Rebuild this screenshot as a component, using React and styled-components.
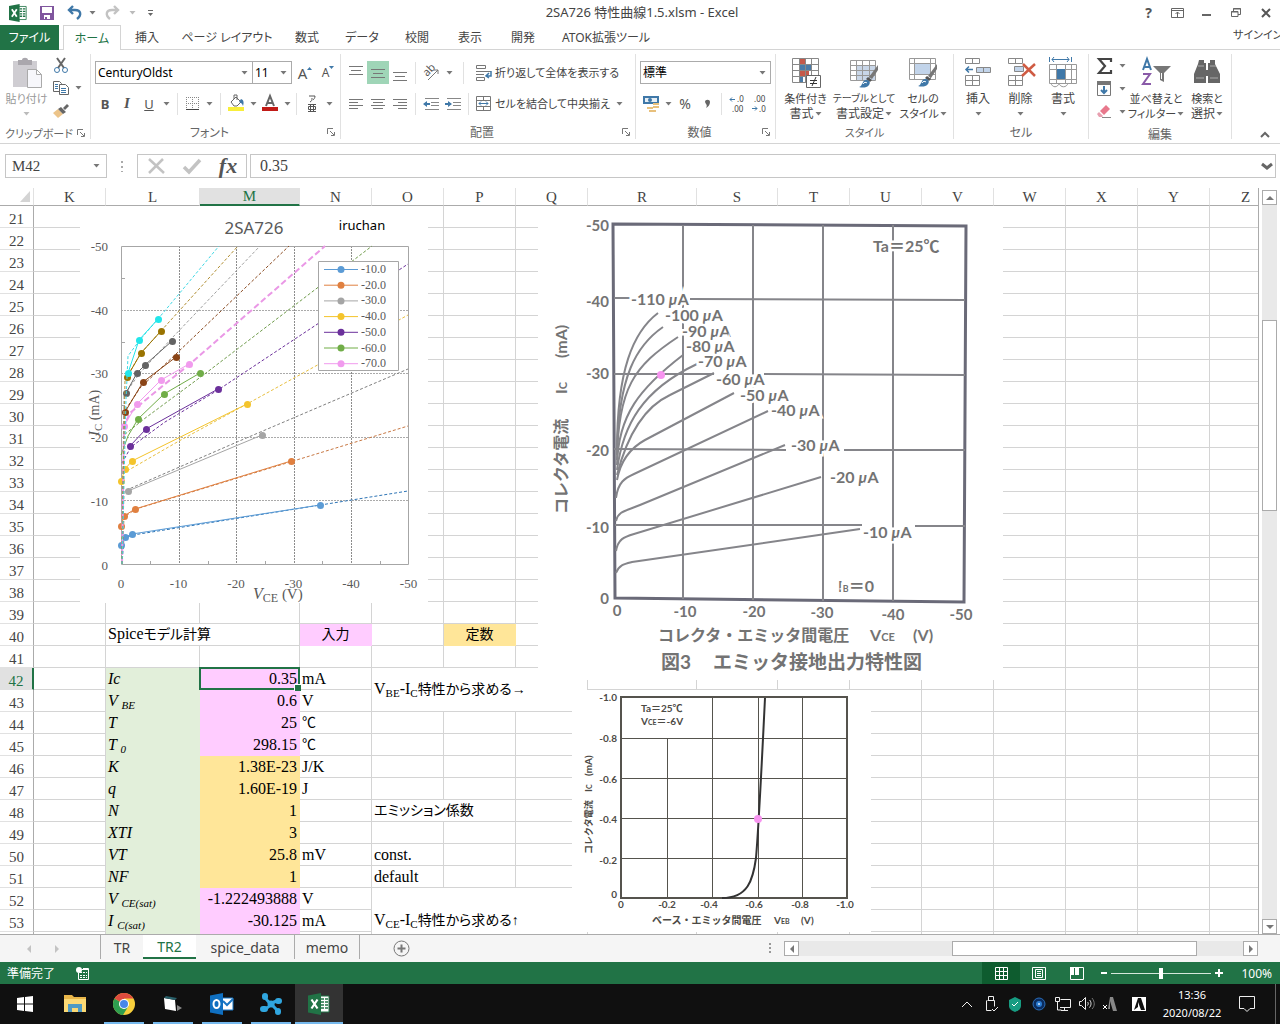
import React from "react";
import styled, { createGlobalStyle, css } from "styled-components";

const UI = `"Noto Sans", "Noto Sans CJK JP", sans-serif`;
const SERIF = `"Liberation Serif", "Noto Sans CJK JP", serif`;
const GREEN = "#217346";

const GlobalStyle = createGlobalStyle`
  * {
    box-sizing: border-box;
  }

  body {
    margin: 0;
    overflow: hidden;
    background: #fff;
    color: #444;
    font: 12px/15px ${UI};
    font-feature-settings: "palt";
  }

  button,
  input,
  select {
    margin: 0;
    padding: 0;
    border: 0;
    outline: 0;
    background: none;
    color: inherit;
    font: inherit;
    font-feature-settings: inherit;
  }
`;

const Window = styled.div`
  height: 100vh;
  display: flex;
  flex-direction: column;
`;

/* title bar */

const TitleBar = styled.header`
  height: 25px;
  flex: none;
  display: grid;
  grid-template-columns: 1fr auto 1fr;
  align-items: center;
  padding: 0 0 0 4px;
`;

const Title = styled.h1`
  margin: 0;
  font: inherit;
  font-size: 13px;
`;

const Tools = styled.div`
  display: flex;
  align-items: center;
  justify-content: ${(p) => (p.$end ? "flex-end" : "flex-start")};
`;

const IconButton = styled.button`
  flex: none;
  width: ${(p) => p.$w || 22}px;
  height: ${(p) => p.$h || 22}px;
  display: flex;
  align-items: center;
  justify-content: center;
  background: ${(p) => (p.$active ? "#9fd5b7" : "none")};

  svg {
    flex: none;
    overflow: visible;
  }
`;

/* ribbon */

const Tabs = styled.nav`
  height: 25px;
  flex: none;
  display: flex;
  border-bottom: 1px solid #d4d4d4;
`;

const Tab = styled.button`
  width: ${(p) => p.$w}px;
  height: 25px;
  white-space: nowrap;
  font-size: 12px;

  ${(p) =>
    p.$file &&
    css`
      margin-right: 4px;
      background: ${GREEN};
      color: #fff;
    `}

  ${(p) =>
    p.$active &&
    css`
      border: 1px solid #d4d4d4;
      border-bottom: 0;
      background: #fff;
      color: ${GREEN};
    `}
`;

const SignIn = styled.a`
  margin-left: auto;
  width: 47px;
  padding-top: 2px;
  overflow: hidden;
  white-space: nowrap;
  font-size: 11px;
  color: #444;
  text-decoration: none;
`;

const Ribbon = styled.div`
  height: 94px;
  flex: none;
  display: flex;
  border-bottom: 1px solid #d4d4d4;
`;

const Group = styled.section`
  width: ${(p) => p.$w}px;
  flex: none;
  margin: 4px 0;
  padding: 0 3px;
  border-right: 1px solid #e1e1e1;
  display: flex;
  flex-direction: column;
`;

const GroupBody = styled.div`
  height: 71px;
  display: flex;
`;

const GroupFoot = styled.div`
  display: flex;
  align-items: center;
  height: 18px;
  padding-top: 4px;
  color: #666;

  span {
    flex: 1;
    text-align: center;
    white-space: nowrap;
    font-size: ${(p) => p.$size || 12}px;
  }
`;

const Stack = styled.div`
  display: flex;
  flex-direction: column;
  flex: none;
  gap: ${(p) => p.$gap || 0}px;
  padding-top: ${(p) => p.$top || 0}px;
  padding-left: ${(p) => p.$left || 0}px;
`;

const Row = styled.div`
  display: flex;
  align-items: center;
  height: 23px;
`;

const Rule = styled.i`
  width: 1px;
  height: 22px;
  margin: 0 ${(p) => p.$m || 4}px;
  background: #e1e1e1;
`;

const Combo = styled.label`
  width: ${(p) => p.$w}px;
  height: 23px;
  margin-left: ${(p) => (p.$join ? -1 : 1)}px;
  padding: 0 4px 0 2px;
  border: 1px solid #ababab;
  display: flex;
  align-items: center;
  color: #000;

  select {
    flex: 1;
    min-width: 0;
    appearance: none;
  }
`;

const TextButton = styled.button`
  display: flex;
  align-items: center;
  gap: 3px;
  padding-left: 3px;
  white-space: nowrap;
  font-size: 11px;
`;

const BigButton = styled.button`
  width: ${(p) => p.$w}px;
  flex: none;
  display: flex;
  flex-direction: column;
  align-items: center;
  justify-content: flex-start;
  padding-top: 4px;
  color: ${(p) => (p.$off ? "#999" : "#444")};
  white-space: nowrap;

  > svg {
    margin-bottom: 3px;
    overflow: visible;
  }

  span {
    display: flex;
    align-items: center;
    gap: 1px;
    height: 15px;
  }
`;

const Narrow = styled.span`
  font-size: ${(p) => p.$size || 11}px;
`;

const Collapse = styled.div`
  flex: 1;
  display: flex;
  align-items: flex-end;
  justify-content: flex-end;
  padding: 0 4px 0 0;
`;

/* formula bar */

const FormulaBar = styled.div`
  height: 24px;
  flex: none;
  margin: 10px 4px 10px 5px;
  display: flex;
  font: 15px ${SERIF};
`;

const Boxed = styled.div`
  width: ${(p) => p.$w}px;
  flex: ${(p) => (p.$w ? "none" : 1)};
  border: 1px solid #c6c6c6;
  display: flex;
  align-items: center;
  margin-right: ${(p) => p.$after || 0}px;
  padding: 0 1px 0 ${(p) => p.$pad || 6}px;

  input {
    flex: 1;
    min-width: 0;
    font-size: ${(p) => p.$size || 15}px;
  }
`;

const Grip = styled.span`
  width: 30px;
  display: flex;
  align-items: center;
  justify-content: center;
`;

/* sheet */

const Work = styled.main`
  flex: 1;
  min-height: 0;
  display: flex;
`;

const Sheet = styled.div`
  position: relative;
  flex: 1;
  min-width: 0;
  overflow: hidden;
  border-right: 1px solid #ababab;
`;

const Grid = styled.table`
  width: 1282px;
  table-layout: fixed;
  border-collapse: separate;
  border-spacing: 0;
  color: #000;
  font: 16px/20px ${SERIF};

  th {
    padding: 0;
    font-weight: normal;
    font-size: 15px;
    color: #444;
  }
`;

const ColHead = styled.th`
  height: 18px;
  line-height: 16px;
  border-right: 1px solid #e1e1e1;
  border-bottom: 1px solid #ababab;

  ${(p) =>
    p.$on &&
    css`
      && {
        color: ${GREEN};
      }
      background: #e1e1e1;
      border-bottom: 2px solid ${GREEN};
    `}
`;

const RowHead = styled.th`
  height: 22px;
  line-height: 16px;
  vertical-align: bottom;
  border-right: 1px solid #ababab;
  border-bottom: 1px solid #e1e1e1;

  ${(p) =>
    p.$on &&
    css`
      && {
        color: ${GREEN};
      }
      background: #e1e1e1;
      border-right: 2px solid ${GREEN};
    `}
`;

const Cell = styled.td`
  height: 22px;
  padding: 0 2px;
  white-space: nowrap;
  text-align: ${(p) => p.$align || "left"};
  font-style: ${(p) => (p.$italic ? "italic" : "normal")};
  background: ${(p) => p.$bg || "none"};
  border: 0 solid ${(p) => p.$bg || "#d4d4d4"};
  border-width: 0 1px 1px 0;

  sub {
    font-size: 11px;
    line-height: 0;
    vertical-align: -3px;
  }

  ${(p) =>
    p.$selected &&
    css`
      position: relative;

      &::before {
        content: "";
        position: absolute;
        inset: -1px;
        border: 2px solid ${GREEN};
      }

      &::after {
        content: "";
        position: absolute;
        right: -2px;
        bottom: -2px;
        width: 6px;
        height: 6px;
        background: ${GREEN};
        border: 1px solid #fff;
        border-width: 1px 0 0 1px;
      }
    `}
`;

const Jp = styled.span`
  font-size: 14px;
  font-feature-settings: "palt";
`;

const Float = styled.svg`
  position: absolute;
  left: ${(p) => p.$x}px;
  top: ${(p) => p.$y}px;
  background: #fff;
  font-family: ${(p) => p.$font || SERIF};
  font-feature-settings: normal;
`;

const Scroll = styled.div`
  display: flex;
  flex-direction: ${(p) => (p.$vertical ? "column" : "row")};
  ${(p) =>
    p.$vertical
      ? "width: 15px; margin: 2px 3px 0 3px; flex: none;"
      : "flex: 0 1 474px; height: 15px;"}
  background: #e9e9e9;
`;

const ScrollButton = styled.button`
  width: 15px;
  height: 15px;
  flex: none;
  display: flex;
  align-items: center;
  justify-content: center;
  border: 1px solid #ababab;
  background: #fff;
`;

const Track = styled.div`
  flex: ${(p) => p.$grow} 1 0;
`;

const Thumb = styled.div`
  flex: ${(p) => p.$grow} 1 0;
  border: 1px solid #ababab;
  background: #fff;
`;

/* sheet tabs */

const SheetBar = styled.div`
  height: 28px;
  flex: none;
  display: flex;
  align-items: center;
  padding-right: 22px;
  background: #f5f5f5;
  border-top: 1px solid #ababab;
`;

const SheetNav = styled.div`
  width: 100px;
  flex: none;
  padding-left: 15px;
  display: flex;
`;

const SheetTab = styled.button`
  width: ${(p) => p.$w}px;
  height: 24px;
  flex: none;
  align-self: flex-start;
  border-left: ${(p) => (p.$first ? "1px solid #ababab" : 0)};
  border-right: ${(p) => (p.$active || p.$first ? 0 : "1px solid #ababab")};
  font-size: 14px;

  ${(p) =>
    p.$active &&
    css`
      background: #fff;
      color: ${GREEN};
      border-bottom: 2px solid ${GREEN};
    `}
`;

const Dots = styled.span`
  margin-left: auto;
  padding-right: 13px;
`;

/* status bar */

const StatusBar = styled.footer`
  height: 22px;
  flex: none;
  display: flex;
  align-items: center;
  padding: 0 8px 0 7px;
  background: ${GREEN};
  color: #fff;
`;

const Ready = styled.span`
  width: 63px;
`;

const Views = styled.div`
  margin-left: auto;
  display: flex;
  align-items: center;
`;

const ViewButton = styled(IconButton)`
  background: ${(p) => (p.$active ? "#0e5c2f" : "none")};
`;

const Zoom = styled.input`
  width: 100px;
  height: 12px;
  appearance: none;
  background: linear-gradient(#d5e8dc, #d5e8dc) center / 100% 1px no-repeat;

  &::-webkit-slider-thumb {
    appearance: none;
    width: 4px;
    height: 11px;
    background: #fff;
  }
`;

const Percent = styled.span`
  width: 45px;
  text-align: right;
`;

/* taskbar */

const TaskBar = styled.div`
  height: 40px;
  flex: none;
  display: flex;
  background: #101010;
  color: #fff;
`;

const Task = styled.button`
  width: ${(p) => p.$w || 49}px;
  display: flex;
  align-items: center;
  justify-content: center;
  background: ${(p) => (p.$active ? "#333" : "none")};

  ${(p) =>
    p.$open &&
    css`
      background-image: linear-gradient(#76b9ed, #76b9ed);
      background-position: center bottom;
      background-size: ${p.$active ? "100%" : "40px"} 2px;
      background-repeat: no-repeat;
    `}
`;

const Tray = styled.div`
  margin-left: auto;
  display: flex;
  align-items: center;
  padding-right: 4px;
`;

const Clock = styled.time`
  width: 72px;
  text-align: center;
  font-size: 11px;
  line-height: 18px;
`;

const DesktopEdge = styled.i`
  width: 1px;
  height: 40px;
  margin-left: 9px;
  background: #666;
`;

/* icons */

const Caret = ({ c = "#777" }) => (
  <svg width="7" height="4" viewBox="0 0 6 4">
    <path d="M0 0h6L3 3.5z" fill={c} />
  </svg>
);

const DropButton = ({ w = 14, h = 22, label, c }) => (
  <IconButton $w={w} $h={h} aria-label={label}>
    <Caret c={c} />
  </IconButton>
);

const Launcher = () => (
  <IconButton $w={12} $h={14} aria-label="詳細">
    <svg width="8" height="8" viewBox="0 0 8 8" fill="none" stroke="#777">
      <path d="M.5 6V.5H6M3 3l4 4M7.5 4v3.5H4" />
    </svg>
  </IconButton>
);

const Lines = ({ rows }) => (
  <svg width="14" height="14" viewBox="0 0 14 14" stroke="#777">
    {rows.map(([x, w, y]) => (
      <path key={y} d={`M${x} ${y + 0.5}h${w}`} />
    ))}
  </svg>
);

const ExcelIcon = ({ s = 18 }) => (
  <svg width={s} height={s} viewBox="0 0 22 22">
    <path d="M11 3h10v16H11z" fill="#fff" stroke={GREEN} />
    <path d="M13 6h3M17 6h3M13 9h3M17 9h3M13 12h3M17 12h3M13 15h3M17 15h3" stroke={GREEN} strokeWidth="1.6" />
    <path d="M0 2.5 13 0v22L0 19.5z" fill={GREEN} />
    <path d="m3.5 6.5 6 9M9.5 6.5l-6 9" stroke="#fff" strokeWidth="2.2" />
  </svg>
);

const Undo = ({ c, flip }) => (
  <svg width="16" height="14" viewBox="0 0 16 14" fill="none" stroke={c} strokeWidth="2.4">
    <g transform={flip ? "matrix(-1 0 0 1 16 0)" : undefined}>
      <path d="M6 0 2 4l4 4M2 4h6c6 0 7 5 2 9" />
    </g>
  </svg>
);

const Brush = ({ x = 0, y = 0 }) => (
  <g transform={`translate(${x} ${y})`} stroke="none">
    <path d="m18-2-9 12 3 2 6-9z" fill="#777" />
    <path d="m8 10 4 3-2 2-4-3z" fill="#555" />
    <path d="M-1 20c4-1 3-7 7-7 3 0 5 2 3 5-2 3-7 3-10 2z" fill="#3f78a8" />
    <path d="M3 17c1-2 3-2 4-1" fill="none" stroke="#fff" />
  </g>
);

const CellBlocks = ({ children }) => (
  <svg width="28" height="30" viewBox="0 0 28 30" fill="#fff" stroke="#888">
    <path d="M1.5.5h14v5h-14zM8.5.5v5M1.5 17.5h14v10h-14zM8.5 17.5v10M1.5 22.5h14" />
    {children}
  </svg>
);

/* characteristic chart: measured points and fitted line for every base current */

const series = [
  { c: "#5b9bd5", fit: "#2e75b6", pts: [[121, 545], [125, 537], [132, 534], [320, 505]], dash: [[122, 564], [124, 538], [133, 535], [408, 491]] },
  { c: "#e08040", fit: "#c87844", pts: [[121, 526], [124, 516], [135, 509], [291, 461]], dash: [[122, 564], [124, 517], [136, 509], [408, 426]] },
  { c: "#a5a5a5", fit: "#808080", pts: [[128, 491], [262, 435]], dash: [[122, 564], [124, 491], [129, 489], [237, 442], [408, 369]] },
  { c: "#f4c42c", fit: "#e8bf40", pts: [[121, 481], [125, 469], [132, 461], [247, 404]], dash: [[122, 564], [123, 474], [127, 471], [179, 441], [247, 404], [408, 315]] },
  { c: "#6b309b", fit: "#6b309b", pts: [[130, 446], [146, 429], [218, 389]], dash: [[122, 463], [131, 447], [165, 422], [218, 390], [408, 264]] },
  { c: "#70ad47", fit: "#6d9a48", pts: [[138, 419], [164, 394], [200, 373]], lead: [[121, 455], [128, 436], [138, 419]], dash: [[122, 564], [124, 435], [144, 419], [206, 373], [295, 305], [372, 246]] },
  { c: "#f19bee", fit: "#ea98e6", w: 2, pts: [[124, 426], [137, 404], [161, 380], [189, 364]], dash: [[122, 564], [124, 426], [130, 413], [165, 384], [190, 364], [325, 246]] },
  { c: "#8a4416", fit: "#8a4a20", pts: [[125, 412], [143, 382], [176, 357]], dash: [[122, 564], [124, 412], [140, 388], [176, 354], [289, 246]] },
  { c: "#636363", fit: "#a0a0a0", pts: [[126, 393], [137, 373], [145, 365], [172, 341]], dash: [[122, 564], [124, 395], [140, 373], [172, 338], [260, 246]] },
  { c: "#997300", fit: "#b08d30", pts: [[127, 377], [141, 353], [161, 331]], dash: [[122, 564], [125, 380], [141, 353], [238, 246]] },
  { c: "#22e6ea", fit: "#3fd8e4", pts: [[128, 373], [139, 340], [158, 319]], dash: [[122, 564], [126, 400], [128, 356], [139, 341], [158, 319], [219, 246]] },
];

const toPath = (pts) => "M" + pts.map((p) => p.join(" ")).join("L");

const SpiceChart = () => (
  <Float $x={80} $y={18} width="348" height="397" viewBox="80 206 348 397">
    <text x="254" y="234" textAnchor="middle" fontSize="17" fill="#595959" fontFamily={UI}>2SA726</text>
    <text x="362" y="230" textAnchor="middle" fontSize="13" fill="#000" fontFamily={UI}>iruchan</text>
    <g stroke="#8c8c8c" strokeDasharray="2 1">
      <path d="M179.5 246v318M236.5 246v318M294.5 246v318M351.5 246v318" />
      <path d="M121 310.5h287M121 373.5h287M121 437.5h287M121 500.5h287" stroke="#aaa" />
    </g>
    <path d="M121.5 246.5h287v318h-287zM121 278.5h4M121 342.5h4M121 405.5h4M150.5 561v3M208.5 561v3M265.5 561v3M322.5 561v3M380.5 561v3" fill="none" stroke="#a6a6a6" />
    {series.map((s) => (
      <g key={s.c} fill="none" stroke={s.c}>
        <path d={toPath(s.dash)} stroke={s.fit} strokeWidth={s.w || 1} strokeDasharray={s.w ? "6 3" : "3 2"} />
        {s.lead && <path d={toPath(s.lead)} />}
        <path d={toPath(s.pts)} />
        {s.pts.map(([x, y]) => (
          <circle key={y} cx={x + 0.5} cy={y + 0.5} r="3.5" fill={s.c} stroke="none" />
        ))}
      </g>
    ))}
    <path d="M318.5 261.5h80v109h-80z" fill="#fff" stroke="#a6a6a6" />
    {series.slice(0, 7).map((s, i) => (
      <g key={s.c}>
        <path d={`M324 ${269.5 + i * 15.7}h34`} stroke={s.c} />
        <circle cx="341" cy={269.5 + i * 15.7} r="3.5" fill={s.c} />
        <text x="361" y={273 + i * 15.7} fontSize="12" fill="#595959">{`-${i + 1}0.0`}</text>
      </g>
    ))}
    <g fontSize="13" fill="#595959">
      {["-50", "-40", "-30", "-20", "-10", "0"].map((t, i) => (
        <text key={t} x="108" y={251 + i * 64 - (i > 1 ? 1 : 0)} textAnchor="end">{t}</text>
      ))}
      {["0", "-10", "-20", "-30", "-40", "-50"].map((t, i) => (
        <text key={t} x={121 + i * 57.5} y="588" textAnchor="middle">{t}</text>
      ))}
    </g>
    <text x="253" y="599" fontSize="16" fill="#595959">
      <tspan fontStyle="italic">V</tspan>
      <tspan fontSize="12" dy="3">CE</tspan>
      <tspan dy="-3" fontSize="15"> (V)</tspan>
    </text>
    <text transform="translate(99 436) rotate(-90)" fontSize="15" fill="#595959">
      <tspan fontStyle="italic">I</tspan>
      <tspan fontSize="11" dy="3">C</tspan>
      <tspan dy="-3" fontSize="14"> (mA)</tspan>
    </text>
  </Float>
);

/* datasheet figure, output characteristics */

const curves = [
  "M617 450C617 370 633 332 658 313",
  "M617 455C618 375 637 345 663 327",
  "M617 460C618 388 634 366 678 337",
  "M617 465C618 415 640 388 683 355",
  "M617 470C623 425 642 390 697 364",
  "M617 475C626 440 642 408 670 395L714 373",
  "M617 480C621 458 634 446 645 440L734 393",
  "M616 498C618 482 625 478 634 474L768 411",
  "M616 521C618 511 626 511 640 505L785 445",
  "M616 551C618 539 624 537 634 534L821 477",
  "M616 573C619 565 624 564 632 562L860 529",
];

const currents = [
  ["-110", 631, 305], ["-100", 665, 321], ["-90", 682, 337], ["-80", 686, 352],
  ["-70", 698, 367], ["-60", 716, 385], ["-50", 740, 401], ["-40", 771, 416],
  ["-30", 791, 451], ["-20", 830, 483], ["-10", 863, 538],
];

const SCAN = `Lato, "Noto Sans CJK JP", sans-serif`;

const OutputFigure = () => (
  <Float $x={538} $y={18} $font={SCAN} width="465" height="474" viewBox="538 206 465 474" fontWeight="700" fill="#737373">
    <g fill="none" stroke="#85858a">
      <path d="M613 224 966 226 964 602 615 598z" stroke="#6a6a78" strokeWidth="3" />
      <path d="M683 225v374M753 225v375M823 225v376M893 225v376" strokeWidth="2" />
      <path d="M614 298h16M690 299l275 1M614 374l100 0M764 374l201 1M614 449l172 1M844 450h121M615 525l247 0M915 526h50" strokeWidth="2" />
      {curves.map((d) => (
        <path key={d} d={d} strokeWidth="2" />
      ))}
    </g>
    <g fontSize="16" paintOrder="stroke" stroke="#fff" strokeWidth="5">
      {currents.map(([t, x, y]) => (
        <text key={t} x={x} y={y}>
          {t} <tspan fontStyle="italic">μ</tspan>A
        </text>
      ))}
      <text x="873" y="252">Ta＝25℃</text>
      <text x="838" y="592">I<tspan fontSize="9">B</tspan>＝0</text>
    </g>
    <g fontSize="15">
      {[["-50", 231], ["-40", 307], ["-30", 379], ["-20", 456], ["-10", 533], ["0", 604]].map(([t, y]) => (
        <text key={t} x="609" y={y} textAnchor="end">{t}</text>
      ))}
      {[["0", 617, 616], ["-10", 685, 617], ["-20", 754, 617], ["-30", 822, 618], ["-40", 893, 620], ["-50", 961, 620]].map(([t, x, y]) => (
        <text key={t} x={x} y={y} textAnchor="middle">{t}</text>
      ))}
    </g>
    <g fontSize="16">
      <text x="658" y="641">コレクタ・エミッタ間電圧</text>
      <text x="870" y="641">V<tspan fontSize="11">CE</tspan></text>
      <text x="913" y="641">(V)</text>
      <g transform="translate(567 514) rotate(-90)">
        <text>コレクタ電流</text>
        <text x="120">I<tspan fontSize="11">C</tspan></text>
        <text x="156">(mA)</text>
      </g>
    </g>
    <text x="661" y="669" fontSize="19">図3</text>
    <text x="713" y="669" fontSize="19">エミッタ接地出力特性図</text>
    <circle cx="661" cy="375" r="4" fill="#f794f0" />
  </Float>
);

const TransferFigure = () => (
  <Float $x={572} $y={502} $font={SCAN} width="299" height="242" viewBox="572 690 299 242" fontWeight="700" fill="#4c4a45" fontSize="10">
    <g fill="none" stroke="#55534d">
      <path d="M621 697h226v201H621z" strokeWidth="2" />
      <path d="M667.5 738v160M712.5 698v200M758.5 698v200M802.5 698v200" />
      <path d="M621 738.5h225M621 778.5h225M621 818.5h225M621 858.5h225" />
      <path d="M722 898C748 898 753 880 756 858C758 835 762 760 765 698" stroke="#333" strokeWidth="2" />
    </g>
    {[["-1.0", 701], ["-0.8", 742], ["-0.6", 783], ["-0.4", 823], ["-0.2", 864], ["0", 898]].map(([t, y]) => (
      <text key={t} x="617" y={y} textAnchor="end">{t}</text>
    ))}
    {[["0", 621], ["-0.2", 667], ["-0.4", 709], ["-0.6", 754], ["-0.8", 800], ["-1.0", 845]].map(([t, x]) => (
      <text key={t} x={x} y="908" textAnchor="middle">{t}</text>
    ))}
    <text x="641" y="712">Ta＝25℃</text>
    <text x="641" y="725">V<tspan fontSize="7">CE</tspan>＝-6V</text>
    <text x="652" y="924">ベース・エミッタ間電圧</text>
    <text x="774" y="924">V<tspan fontSize="7">EB</tspan></text>
    <text x="801" y="924">(V)</text>
    <g transform="translate(592 854) rotate(-90)">
      <text fontSize="9">コレクタ電流</text>
      <text x="62">I<tspan fontSize="7">C</tspan></text>
      <text x="78">(mA)</text>
    </g>
    <circle cx="758" cy="819" r="4" fill="#f794f0" />
  </Float>
);

/* sheet data */

const columns = [
  ["K", 72], ["L", 94], ["M", 100], ["N", 72], ["O", 72], ["P", 72], ["Q", 72], ["R", 109],
  ["S", 81], ["T", 72], ["U", 72], ["V", 72], ["W", 72], ["X", 72], ["Y", 72], ["Z", 72],
];

const PINK = "#ffccff";
const GOLD = "#ffe699";
const MINT = "#e2efda";

const cells = {
  L40: { text: <>Spice<Jp>モデル計算</Jp></>, cols: 2 },
  N40: { text: <Jp>入力</Jp>, $align: "center", $bg: PINK },
  P40: { text: <Jp>定数</Jp>, $align: "center", $bg: GOLD },
  O42: { text: <>V<sub>BE</sub>-I<sub>C</sub><Jp>特性から求める→</Jp></>, cols: 3, rows: 2 },
  O48: { text: <Jp>エミッション係数</Jp>, cols: 2 },
  O50: { text: "const." },
  O51: { text: "default" },
  O52: { text: <>V<sub>CE</sub>-I<sub>C</sub><Jp>特性から求める↑</Jp></>, cols: 3, rows: 3 },
};

const params = [
  ["Ic", "0.35", "mA", PINK],
  [<>V <sub>BE</sub></>, "0.6", "V", PINK],
  ["T", "25", <Jp>℃</Jp>, PINK],
  [<>T <sub>0</sub></>, "298.15", <Jp>℃</Jp>, PINK],
  ["K", "1.38E-23", "J/K", GOLD],
  ["q", "1.60E-19", "J", GOLD],
  ["N", "1", "", GOLD],
  ["XTI", "3", "", GOLD],
  ["VT", "25.8", "mV", GOLD],
  ["NF", "1", "", GOLD],
  [<>V <sub>CE(sat)</sub></>, "-1.222493888", "V", PINK],
  [<>I <sub>C(sat)</sub></>, "-30.125", "mA", PINK],
  ["", "", "", PINK],
];

params.forEach(([name, value, unit, bg], i) => {
  const r = 42 + i;
  cells["L" + r] = { text: name, $bg: MINT, $italic: true };
  cells["M" + r] = { text: value, $bg: bg, $align: "right", $selected: r === 42 };
  cells["N" + r] = { text: unit };
});

const FIRST_ROW = 21;
const LAST_ROW = 54;
const rowNumbers = Array.from({ length: LAST_ROW - FIRST_ROW + 1 }, (_, i) => FIRST_ROW + i);

const SheetRow = ({ n }) => {
  const out = [];
  const inMerge = n === 43 || n > 52;
  for (let i = 0; i < columns.length; i++) {
    const name = columns[i][0];
    if (inMerge && "OPQ".includes(name)) continue;
    const { text, cols, rows, ...style } = cells[name + n] || {};
    out.push(
      <Cell key={name} colSpan={cols} rowSpan={rows} {...style}>
        {text}
      </Cell>
    );
    if (cols) i += cols - 1;
  }
  return (
    <tr>
      <RowHead scope="row" $on={n === 42}>{n < LAST_ROW && n}</RowHead>
      {out}
    </tr>
  );
};

const tabs = [
  ["ファイル", 59], ["ホーム", 58], ["挿入", 52], ["ページ レイアウト", 108], ["数式", 52],
  ["データ", 58], ["校閲", 52], ["表示", 54], ["開発", 52], ["ATOK拡張ツール", 114],
];

const ClipboardGroup = () => (
  <Group $w={91}>
    <GroupBody>
      <BigButton $w={47} $off>
        <svg width="30" height="30" viewBox="0 0 30 30">
          <path d="M1 3h24v26H1z" fill="#cfcdd2" />
          <path d="M6 2h4c0-3 6-3 6 0h4v5H6z" fill="#aaa7ad" />
          <path d="M15.500 11.500h9l5 5v13h-14zM24.500 11.500v5h5" fill="#f7f7fb" stroke="#aaa" />
        </svg>
        <Narrow>貼り付け</Narrow>
        <span><Caret c="#bbb" /></span>
      </BigButton>
      <Stack>
        <IconButton $h={22} aria-label="切り取り">
          <svg width="14" height="15" viewBox="0 0 14 15" fill="none">
            <path d="M3 0l7 10M11 0 4 10" stroke="#666" strokeWidth="2" />
            <circle cx="3" cy="12" r="2.5" stroke="#3f78a8" />
            <circle cx="11" cy="12" r="2.5" stroke="#3f78a8" />
          </svg>
        </IconButton>
        <Row>
          <IconButton aria-label="コピー">
            <svg width="16" height="14" viewBox="0 0 16 14" fill="#fff" stroke="#666">
              <path d="M.5.5h6l2 2v8h-8z" />
              <path d="M6.5 3.5h6l3 3v7h-9z" />
              <path d="M2 3.5h3M2 5.5h3M2 7.5h3M8 7.5h5M8 9.5h5M8 11.5h5" stroke="#3f78a8" />
            </svg>
          </IconButton>
          <DropButton w={12} label="コピーのオプション" />
        </Row>
        <IconButton $h={23} aria-label="書式のコピー">
          <svg width="16" height="14" viewBox="0 0 16 14">
            <path d="m0 9 5-4 5 5-5 4z" fill="#ecc48a" />
            <path d="m5 5 3-2 5 5-3 2zM10 4l4-4 2 2-4 4z" fill="#666" />
          </svg>
        </IconButton>
      </Stack>
    </GroupBody>
    <GroupFoot $size={11}><span>クリップボード</span><Launcher /></GroupFoot>
  </Group>
);

const Glyph = styled.span`
  font: ${(p) => p.$font};
  text-decoration: ${(p) => (p.$under ? "underline" : "none")};
  color: #555;
`;

const FontGroup = () => (
  <Group $w={250}>
    <GroupBody>
      <Stack $top={7} $gap={8}>
        <Row>
          <Combo $w={158}>
            <select aria-label="フォント"><option>CenturyOldst</option></select>
            <Caret />
          </Combo>
          <Combo $w={40} $join>
            <select aria-label="サイズ"><option>11</option></select>
            <Caret />
          </Combo>
          <IconButton $w={26} aria-label="拡大">
            <Glyph $font={`15px ${UI}`}>A</Glyph>
            <svg width="5" height="12"><path d="m0 3 2.5-3L5 3z" fill="#3f78a8" /></svg>
          </IconButton>
          <IconButton $w={20} aria-label="縮小">
            <Glyph $font={`12px ${UI}`}>A</Glyph>
            <svg width="5" height="14"><path d="m0 0 2.500 3L5 0z" fill="#3f78a8" /></svg>
          </IconButton>
        </Row>
        <Row>
          <IconButton><Glyph $font={`bold 13px ${UI}`}>B</Glyph></IconButton>
          <IconButton><Glyph $font={`italic bold 15px ${SERIF}`}>I</Glyph></IconButton>
          <IconButton><Glyph $font={`13px ${UI}`} $under>U</Glyph></IconButton>
          <DropButton w={12} label="下線" />
          <Rule $m={5} />
          <IconButton $w={18} aria-label="罫線">
            <svg width="13" height="13" viewBox="0 0 13 13" stroke="#888" fill="none">
              <path d="M.5 0v12M6.5 0v12M12.5 0v12M0 .5h13M0 6.5h13" strokeDasharray="1 1" />
              <path d="M0 12.5h13" stroke="#444" />
            </svg>
          </IconButton>
          <DropButton w={16} label="罫線の種類" />
          <Rule $m={3} />
          <IconButton $w={24} aria-label="塗りつぶし">
            <svg width="17" height="17" viewBox="0 0 17 17">
              <path d="m3 7 5-5 5 5-4 4H6zM6 4V0h3v5" fill="none" stroke="#666" />
              <path d="M13 4c3 1 3 4 2 7-1-3-2-3-4-4z" fill="#3f78a8" />
              <path d="M0 12h16v4H0z" fill="#f8ee3a" />
            </svg>
          </IconButton>
          <DropButton w={10} label="塗りつぶしの色" />
          <IconButton $w={24} aria-label="フォントの色">
            <svg width="16" height="17" viewBox="0 0 16 17">
              <path d="m4 11 4-10 4 10M5.5 8h5" fill="none" stroke="#666" strokeWidth="2" />
              <path d="M0 12h16v4H0z" fill="#c11b17" />
            </svg>
          </IconButton>
          <DropButton w={10} label="フォントの色の一覧" />
          <Rule $m={4} />
          <IconButton aria-label="ふりがな">
            <svg width="10" height="18" viewBox="0 0 10 18" fill="none" stroke="#555">
              <path d="M2 1h6c0 2-1 3-2 4M5 3c0 2 0 3-2 4M1 9.5h8M1 16.5h8M3.5 9.5v7M6.5 9.5v7M1.5 11.5h7v3h-7z" />
            </svg>
          </IconButton>
          <DropButton w={12} label="ふりがなの設定" />
        </Row>
      </Stack>
    </GroupBody>
    <GroupFoot><span>フォント</span><Launcher /></GroupFoot>
  </Group>
);

const Indent = ({ out }) => (
  <svg width="16" height="12" viewBox="0 0 16 12">
    <path d="M2 .5h14M8 4.5h8M8 7.5h8M2 11.5h14" stroke="#888" />
    <path d={out ? "M4 3 0 6l4 3V7h3V5H4z" : "M3 3l4 3-4 3V7H0V5h3z"} fill="#3f78a8" />
  </svg>
);

const AlignGroup = () => (
  <Group $w={295}>
    <GroupBody>
      <Stack $top={7} $gap={8} $left={1}>
        <Row>
          <IconButton aria-label="上揃え"><Lines rows={[[0, 14, 0], [2, 10, 4], [0, 14, 8]]} /></IconButton>
          <IconButton $active $h={23} aria-label="上下中央揃え"><Lines rows={[[0, 14, 3], [2, 10, 7], [0, 14, 11]]} /></IconButton>
          <IconButton aria-label="下揃え"><Lines rows={[[0, 14, 6], [2, 10, 10], [0, 14, 14]]} /></IconButton>
          <Rule />
          <IconButton $w={24} aria-label="方向">
            <svg width="16" height="16" viewBox="0 0 16 16">
              <text transform="translate(3 12) rotate(-45)" fontSize="11" fill="#555">ab</text>
              <path d="m4 15 10-10M10 5h4v4" fill="none" stroke="#777" />
            </svg>
          </IconButton>
          <DropButton w={10} label="方向の種類" />
          <Rule $m={9} />
          <TextButton>
            <svg width="16" height="16" viewBox="0 0 16 16" fill="none" stroke="#777">
              <path d="M.5.5h9v3h-9zM0 6.5h15M0 9.5h8M.5 12.5h8v3h-8z" />
              <path d="M15 6v5h-4M13 8l-3 3 3 2" stroke="#3f78a8" strokeWidth="1.5" />
            </svg>
            折り返して全体を表示する
          </TextButton>
        </Row>
        <Row>
          <IconButton aria-label="左揃え"><Lines rows={[[0, 14, 2], [0, 9, 5], [0, 14, 8], [0, 9, 11]]} /></IconButton>
          <IconButton aria-label="中央揃え"><Lines rows={[[0, 14, 2], [2, 10, 5], [0, 14, 8], [2, 10, 11]]} /></IconButton>
          <IconButton aria-label="右揃え"><Lines rows={[[0, 14, 2], [5, 9, 5], [0, 14, 8], [5, 9, 11]]} /></IconButton>
          <Rule />
          <IconButton aria-label="インデントを減らす"><Indent out /></IconButton>
          <IconButton aria-label="インデントを増やす"><Indent /></IconButton>
          <Rule />
          <TextButton>
            <svg width="16" height="16" viewBox="0 0 16 16" fill="none" stroke="#777">
              <path d="M.5.5h14v14H.5zM0 4.5h15M0 10.5h15M7.5 0v4M7.5 11v4" />
              <path d="M3 7.5h9M5 5.5l-2 2 2 2M10 5.5l2 2-2 2" stroke="#3f78a8" />
            </svg>
            セルを結合して中央揃え
          </TextButton>
          <DropButton w={20} label="セルの結合" />
        </Row>
      </Stack>
    </GroupBody>
    <GroupFoot><span>配置</span><Launcher /></GroupFoot>
  </Group>
);

const Decimals = ({ more }) => (
  <svg width="16" height="16" viewBox="0 0 16 16" fontSize="8" fill="#444" fontFamily={UI}>
    <text x={more ? 8 : 3} y="6">{more ? ".0" : ".00"}</text>
    <text x={more ? 3 : 8} y="16">{more ? ".00" : ".0"}</text>
    <path d={more ? "M6 3.5H1M3 1.5l-2 2 2 2" : "M1 12.5h5M4 10.5l2 2-2 2"} fill="none" stroke="#3f78a8" />
  </svg>
);

const NumberGroup = () => (
  <Group $w={140}>
    <GroupBody>
      <Stack $top={7} $gap={8}>
        <Row>
          <Combo $w={131}>
            <select aria-label="表示形式"><option>標準</option></select>
            <Caret />
          </Combo>
        </Row>
        <Row>
          <IconButton $w={24} aria-label="通貨">
            <svg width="16" height="16" viewBox="0 0 16 16">
              <path d="M0 0h16v8H0z" fill="#3f78a8" />
              <path d="M2 2h12v4H2z" fill="#e6eef5" />
              <circle cx="7" cy="4" r="2" fill="#3f78a8" />
              <path d="M10 7h6v2h-6zM10 10h6v2h-6zM4 11h6v2H4zM6 14h7v2H6z" fill="#e8c07c" />
            </svg>
          </IconButton>
          <DropButton w={10} label="通貨の種類" />
          <IconButton $w={24}><Glyph $font={`14px ${UI}`}>%</Glyph></IconButton>
          <IconButton $w={20} aria-label="桁区切り">
            <svg width="5" height="8"><path d="M0 2c0-3 5-3 5 0 0 3-2 5-4 6 1-2 1-3 0-4z" fill="#666" /></svg>
          </IconButton>
          <Rule />
          <IconButton aria-label="小数点以下を増やす"><Decimals more /></IconButton>
          <IconButton aria-label="小数点以下を減らす"><Decimals /></IconButton>
        </Row>
      </Stack>
    </GroupBody>
    <GroupFoot><span>数値</span><Launcher /></GroupFoot>
  </Group>
);

const StyleGroup = () => (
  <Group $w={178}>
    <GroupBody>
      <BigButton $w={53}>
        <svg width="30" height="30" viewBox="0 0 30 30" fill="none" stroke="#888">
          <path d="M8 1h6v5H8zM8 13h10v5H8z" fill="#c4594a" stroke="none" />
          <path d="M8 7h12v5H8zM8 19h4v5H8z" fill="#4a7ba8" stroke="none" />
          <path d="M1.5.5h26v24h-26zM1.5 6.5h26M1.5 12.5h26M1.5 18.5h26M8.5.5v24M14.5.5v24M20.5.5v24" />
          <path d="M15.500 17.500h14v12h-14z" fill="#fff" stroke="#666" />
          <path d="M19 22.5h7M19 25.5h7M25 19l-4 9" stroke="#333" />
        </svg>
        <Narrow>条件付き</Narrow>
        <span>書式 <Caret /></span>
      </BigButton>
      <BigButton $w={64}>
        <svg width="30" height="30" viewBox="0 0 30 30" fill="none" stroke="#999">
          <path d="M8 7h18v15H8z" fill="#c8d6e8" stroke="none" />
          <path d="M1.5 2.5h25v20h-25zM1.5 7.5h25M1.5 12.5h25M1.5 17.5h25M7.5 2.5v20M13.5 2.5v20M20.5 2.5v20" />
          <Brush x={11} y={9} />
        </svg>
        <Narrow $size={10}>テーブルとして</Narrow>
        <span>書式設定 <Caret /></span>
      </BigButton>
      <BigButton $w={54}>
        <svg width="30" height="30" viewBox="0 0 30 30" fill="none" stroke="#999">
          <path d="M1.5.5h26v21h-26zM1.5 5.5h26M6.5.5v21M22.5.5v21M1.5 16.5h26" />
          <path d="M7 6h15v10H7z" fill="#c2d4ea" stroke="none" />
          <Brush x={11} y={8} />
        </svg>
        <Narrow>セルの</Narrow>
        <Narrow>スタイル <Caret /></Narrow>
      </BigButton>
    </GroupBody>
    <GroupFoot $size={11}><span>スタイル</span></GroupFoot>
  </Group>
);

const CellsGroup = () => (
  <Group $w={135}>
    <GroupBody>
      <BigButton $w={42}>
        <CellBlocks>
          <path d="M12.5 9.5h14v5h-14zM19.5 9.5v5" fill="#c2d4ea" />
          <path d="M9 11.500H2M5 8.500l-3 3 3 3" fill="none" stroke="#3f78a8" strokeWidth="1.5" />
        </CellBlocks>
        <span>挿入</span>
        <span><Caret /></span>
      </BigButton>
      <BigButton $w={43}>
        <CellBlocks>
          <path d="M7.5 8.5h9v5h-9z" fill="#c2d4ea" />
          <path d="m16 6 12 12M28 6 15 18" stroke="#cf5b43" strokeWidth="2.5" />
        </CellBlocks>
        <span>削除</span>
        <span><Caret /></span>
      </BigButton>
      <BigButton $w={42}>
        <svg width="28" height="30" viewBox="0 0 28 30" fill="none" stroke="#999">
          <path d="M.5 6.5h27v19H.5zM.5 11.5h27M.5 21.5h27M7.5 6.5v19M16.5 6.5v19M22.5 6.5v19M2 25c1 5 7 5 8 0 1 5 8 5 9 0" />
          <path d="M8 11h8v10H8z" fill="#3f78a8" stroke="none" />
          <path d="M.5-1v5M22.5-1v5M3 1.500h17M5-1 3 1.500l2 2.500M18-1l2 2.500-2 2.500" stroke="#3f78a8" />
        </svg>
        <span>書式</span>
        <span><Caret /></span>
      </BigButton>
    </GroupBody>
    <GroupFoot><span>セル</span></GroupFoot>
  </Group>
);

const EditGroup = () => (
  <Group $w={143}>
    <GroupBody>
      <Stack>
        <Row>
          <IconButton $w={24} aria-label="合計">
            <svg width="15" height="16" viewBox="0 0 15 16" fill="none" stroke="#444" strokeWidth="2.2">
              <path d="M14 4V1H2l6 7-6 7h12v-3" />
            </svg>
          </IconButton>
          <DropButton w={12} label="合計の種類" />
        </Row>
        <Row>
          <IconButton $w={24} aria-label="フィル">
            <svg width="14" height="15" viewBox="0 0 14 15" fill="none">
              <path d="M.5.5h13v14H.5z" stroke="#777" />
              <path d="M0 0h14v4H0z" fill="#777" />
              <path d="M7 5v7M4 9l3 3 3-3" stroke="#3f78a8" strokeWidth="2" />
            </svg>
          </IconButton>
          <DropButton w={12} label="フィルの種類" />
        </Row>
        <Row>
          <IconButton $w={24} aria-label="クリア">
            <svg width="14" height="13" viewBox="0 0 14 13">
              <path d="m3 6 6-6 4 4-6 6z" fill="#e8788c" />
              <path d="m0 9 2-2 4 4-1 1H2z" fill="#e8a0b0" />
              <path d="M5 12.5h9" stroke="#888" />
            </svg>
          </IconButton>
          <DropButton w={12} label="クリアの種類" />
        </Row>
      </Stack>
      <BigButton $w={56}>
        <svg width="30" height="30" viewBox="0 0 30 30" fill="none">
          <path d="m2 12 4-11 4 11M3 9h6" stroke="#3f78a8" strokeWidth="2" />
          <path d="M2 16h7l-7 10h8" stroke="#8a5aa8" strokeWidth="2" />
          <path d="M12 8h18l-7 7v9l-4-2v-7z" fill="#777" />
          <path d="M20.500 15v6" stroke="#fff" />
        </svg>
        <Narrow>並べ替えと</Narrow>
        <Narrow>フィルター <Caret /></Narrow>
      </BigButton>
      <BigButton $w={46}>
        <svg width="28" height="30" viewBox="0 0 28 30" fill="#666">
          <path d="M6 2h5v3h2v20H1v-9L5 6zM17 2h5v4l5 10v9H15V5h2zM12 12h4v6h-4z" />
          <path d="M5 8h6M17 8h6M3 20h8M17 20h8" stroke="#aaa" />
        </svg>
        <Narrow>検索と</Narrow>
        <span>選択 <Caret /></span>
      </BigButton>
    </GroupBody>
    <GroupFoot><span>編集</span></GroupFoot>
  </Group>
);

const arrows = {
  up: "M0 6l4-4 4 4z",
  down: "M0 2l4 4 4-4z",
  left: "M6 0 2 4l4 4z",
  right: "M2 0l4 4-4 4z",
};

const Arrow = ({ dir, c = "#777" }) => (
  <svg width="8" height="8"><path d={arrows[dir]} fill={c} /></svg>
);

const App = () => (
  <Window>
    <GlobalStyle />
    <TitleBar>
      <Tools>
        <IconButton $w={28} aria-label="Excel"><ExcelIcon /></IconButton>
        <IconButton $w={30} aria-label="上書き保存">
          <svg width="14" height="14" viewBox="0 0 14 14">
            <path d="M0 0h14v14H0z" fill="#80569e" />
            <path d="M2 1h10v6H2zM4 9h6v4H7v-2H5v2H4z" fill="#fff" />
          </svg>
        </IconButton>
        <IconButton $w={26} aria-label="元に戻す"><Undo c="#3f78a8" /></IconButton>
        <DropButton w={8} label="元に戻す履歴" />
        <IconButton $w={32} aria-label="やり直し"><Undo c="#c3c3c3" flip /></IconButton>
        <DropButton w={8} label="やり直し履歴" c="#bbb" />
        <IconButton $w={28} aria-label="カスタマイズ">
          <svg width="5" height="6"><path d="M0 .5h5" stroke="#666" /><path d="M0 3h5L2.5 6z" fill="#666" /></svg>
        </IconButton>
      </Tools>
      <Title>2SA726 特性曲線1.5.xlsm - Excel</Title>
      <Tools $end>
        <IconButton $w={29}><Glyph $font={`bold 14px ${UI}`}>?</Glyph></IconButton>
        <IconButton $w={29} aria-label="リボンの表示オプション">
          <svg width="13" height="10" viewBox="0 0 13 10" fill="none" stroke="#666"><path d="M.5.5h12v9H.5zM0 2.5h13M6.5 9V4M4.5 6l2-2 2 2" /></svg>
        </IconButton>
        <IconButton $w={29} aria-label="最小化">
          <svg width="9" height="8"><path d="M0 6h9" stroke="#666" strokeWidth="2" /></svg>
        </IconButton>
        <IconButton $w={30} aria-label="元に戻す(縮小)">
          <svg width="10" height="10" viewBox="0 0 10 10" fill="none" stroke="#666"><path d="M2.5 3V.5h7v6H7M.5 3.5h6.5v5H.5zM0 4h7M2 1h8" /></svg>
        </IconButton>
        <IconButton $w={29} aria-label="閉じる">
          <svg width="10" height="10"><path d="m1 1 8 8M9 1 1 9" stroke="#555" strokeWidth="2" /></svg>
        </IconButton>
      </Tools>
    </TitleBar>
    <Tabs>
      {tabs.map(([label, w], i) => (
        <Tab key={label} $w={w} $file={i === 0} $active={i === 1}>{label}</Tab>
      ))}
      <SignIn href="#signin">サインイン</SignIn>
    </Tabs>
    <Ribbon>
      <ClipboardGroup />
      <FontGroup />
      <AlignGroup />
      <NumberGroup />
      <StyleGroup />
      <CellsGroup />
      <EditGroup />
      <Collapse>
        <IconButton $h={18} aria-label="リボンを折りたたむ">
          <svg width="8" height="5" fill="none"><path d="m0 5 4-4 4 4" stroke="#666" strokeWidth="2" /></svg>
        </IconButton>
      </Collapse>
    </Ribbon>
    <FormulaBar>
      <Boxed $w={102}>
        <input aria-label="名前ボックス" defaultValue="M42" />
        <DropButton w={18} label="名前の一覧" />
      </Boxed>
      <Grip>
        <svg width="2" height="12"><path d="M1 1v12" stroke="#aaa" strokeWidth="2" strokeDasharray="2 3" /></svg>
      </Grip>
      <Boxed $w={110} $pad={1} $after={3}>
        <IconButton $w={34} aria-label="キャンセル">
          <svg width="17" height="16"><path d="m1 1 15 14M15 1 1 15" stroke="#c3c3c3" strokeWidth="2.5" /></svg>
        </IconButton>
        <IconButton $w={38} aria-label="入力">
          <svg width="18" height="16" fill="none"><path d="m1 9 5 5L17 2" stroke="#c3c3c3" strokeWidth="3.5" /></svg>
        </IconButton>
        <IconButton $w={34}><Glyph $font={`italic bold 22px/20px ${SERIF}`}>fx</Glyph></IconButton>
      </Boxed>
      <Boxed $pad={9} $size={16}>
        <input aria-label="数式バー" defaultValue="0.35" />
        <IconButton $w={14} aria-label="数式バーの展開">
          <svg width="10" height="7" fill="none"><path d="m0 1 5 4 5-4" stroke="#666" strokeWidth="3" /></svg>
        </IconButton>
      </Boxed>
    </FormulaBar>
    <Work>
      <Sheet>
        <Grid>
          <colgroup>
            <col width="34" />
            {columns.map(([name, w]) => <col key={name} width={w} />)}
          </colgroup>
          <thead>
            <tr>
              <ColHead aria-label="すべて選択">
                <svg width="34" height="12" display="block"><path d="M30 0v11H20z" fill="#d4d4d4" /></svg>
              </ColHead>
              {columns.map(([name]) => <ColHead key={name} scope="col" $on={name === "M"}>{name}</ColHead>)}
            </tr>
          </thead>
          <tbody>
            {rowNumbers.map((n) => <SheetRow key={n} n={n} />)}
          </tbody>
        </Grid>
        <SpiceChart />
        <OutputFigure />
        <TransferFigure />
      </Sheet>
      <Scroll $vertical>
        <ScrollButton aria-label="上へ"><Arrow dir="up" /></ScrollButton>
        <Track $grow={116} />
        <Thumb $grow={190} />
        <Track $grow={410} />
        <ScrollButton aria-label="下へ"><Arrow dir="down" /></ScrollButton>
      </Scroll>
    </Work>
    <SheetBar>
      <SheetNav>
        <IconButton $w={28} aria-label="前のシート"><Arrow dir="left" c="#c3c3c3" /></IconButton>
        <IconButton $w={28} aria-label="次のシート"><Arrow dir="right" c="#c3c3c3" /></IconButton>
      </SheetNav>
      <SheetTab $w={43} $first>TR</SheetTab>
      <SheetTab $w={53} $active>TR2</SheetTab>
      <SheetTab $w={99}>spice_data</SheetTab>
      <SheetTab $w={65}>memo</SheetTab>
      <IconButton $w={82} aria-label="新しいシート">
        <svg width="17" height="17" viewBox="0 0 17 17" fill="none" stroke="#777">
          <circle cx="8.5" cy="8.5" r="7.5" />
          <path d="M8.5 4.5v8M4.5 8.5h8" strokeWidth="2" />
        </svg>
      </IconButton>
      <Dots><svg width="2" height="10"><path d="M1 0v10" stroke="#999" strokeWidth="2" strokeDasharray="2 2" /></svg></Dots>
      <Scroll>
        <ScrollButton aria-label="左へ"><Arrow dir="left" /></ScrollButton>
        <Track $grow={154} />
        <Thumb $grow={244} />
        <Track $grow={46} />
        <ScrollButton aria-label="右へ"><Arrow dir="right" /></ScrollButton>
      </Scroll>
    </SheetBar>
    <StatusBar>
      <Ready>準備完了</Ready>
      <IconButton $w={24} aria-label="マクロの記録">
        <svg width="13" height="13" viewBox="0 0 13 13" fill="none" stroke="#fff">
          <path d="M2.5 6v6.500h10v-11H7M6 2.500h6" />
          <path d="M4 5.500h7M4 8.500h7M4 10.500h7" strokeDasharray="2 1" />
          <circle cx="3" cy="3" r="3" fill="#fff" stroke="none" />
        </svg>
      </IconButton>
      <Views>
        <ViewButton $w={38} $active aria-label="標準">
          <svg width="13" height="13" fill="none" stroke="#fff"><path d="M.5.5h12v12H.5zM4.5 0v13M8.5 0v13M0 4.5h13M0 8.5h13" /></svg>
        </ViewButton>
        <ViewButton $w={38} aria-label="ページ レイアウト">
          <svg width="14" height="13" fill="none" stroke="#fff"><path d="M.5.5h13v12H.5zM3.5 2.5h7v8h-7zM5 4.5h4M5 6.5h4M5 8.5h4" /></svg>
        </ViewButton>
        <ViewButton $w={38} aria-label="改ページ プレビュー">
          <svg width="14" height="13" fill="none" stroke="#fff"><path d="M.5.5h13v12H.5z" /><path d="M0 0h4v8H0zM5 0h4v8H5z" fill="#fff" stroke="none" /></svg>
        </ViewButton>
        <IconButton $w={15} aria-label="縮小"><svg width="6" height="2"><path d="M0 1h6" stroke="#fff" strokeWidth="2" /></svg></IconButton>
        <Zoom type="range" aria-label="ズーム" defaultValue="50" />
        <IconButton $w={16} aria-label="拡大"><svg width="8" height="8"><path d="M0 4h8M4 0v8" stroke="#fff" strokeWidth="2" /></svg></IconButton>
        <Percent>100%</Percent>
      </Views>
    </StatusBar>
    <TaskBar>
      <Task aria-label="スタート" $w={50}>
        <svg width="16" height="16"><path d="M0 2l7-1v6.5H0zM8 1l8-1v7.5H8zM0 8.5h7V15l-7-1zM8 8.5h8V16l-8-1z" fill="#fff" /></svg>
      </Task>
      <Task aria-label="エクスプローラー">
        <svg width="22" height="20" viewBox="0 0 22 20">
          <path d="M0 1h8l2 2h12v15H0z" fill="#e9b64a" />
          <path d="M0 5h22v13H0z" fill="#fbd975" />
          <path d="M4 18v-8h14v8h-4v-4H8v4z" fill="#4e9ac4" />
        </svg>
      </Task>
      <Task aria-label="Chrome" $open>
        <svg width="22" height="22" viewBox="0 0 22 22">
          <circle cx="11" cy="11" r="11" fill="#f7cf3c" />
          <path d="M11 11 1.500 5.500A11 11 0 0 0 10 22l5.500-9z" fill="#2f9e4f" />
          <path d="M11 11 1.500 5.500A11 11 0 0 1 20.500 5.500H11z" fill="#dd4b3e" />
          <circle cx="11" cy="11" r="5" fill="#fff" />
          <circle cx="11" cy="11" r="4" fill="#4886e8" />
        </svg>
      </Task>
      <Task aria-label="エディター" $open>
        <svg width="18" height="16" viewBox="0 0 18 16">
          <path d="m0 2 11 2 1 11-11-2z" fill="#fff" />
          <path d="m0 2 2-2 11 2-2 2z" fill="#28606a" />
          <path d="m13 9 5 3-5 3z" fill="#888" />
        </svg>
      </Task>
      <Task aria-label="Outlook" $open>
        <svg width="24" height="22" viewBox="0 0 24 22">
          <path d="M12 5h11v12H12z" fill="#fff" stroke="#1976c5" />
          <path d="m13 8 4 4 6-6" fill="none" stroke="#1976c5" strokeWidth="2" />
          <path d="M0 2.5 13 0v22L0 19.5z" fill="#0f6fc0" />
          <ellipse cx="6.5" cy="11" rx="3" ry="4" fill="none" stroke="#fff" strokeWidth="2" />
        </svg>
      </Task>
      <Task aria-label="XMind" $open>
        <svg width="22" height="22" viewBox="0 0 22 22" fill="none" stroke="#30a6df" strokeLinecap="round">
          <path d="M5 3c1 5 3 5 6 8 3 3 5 4 7 8M3 16c4 0 6-2 8-5 2-2 4-3 8-3" strokeWidth="3" />
          <path d="M5 3v1M3 16h2M18 18v1M19 8h-1" strokeWidth="6" />
          <path d="M11 11h.1" strokeWidth="7" />
        </svg>
      </Task>
      <Task aria-label="Excel" $open $active $w={48}><ExcelIcon s={22} /></Task>
      <Tray>
        <IconButton $w={24} aria-label="隠れているアイコン">
          <svg width="12" height="7" fill="none"><path d="m1 6 5-5 5 5" stroke="#eee" /></svg>
        </IconButton>
        <IconButton $w={24} aria-label="USB">
          <svg width="13" height="16" viewBox="0 0 13 16" fill="none" stroke="#eee"><path d="M3.5.5h5v4h-5zM2.5 4.5h7v6M1.5 4.5v10h5M7 13l2 2 4-4" /></svg>
        </IconButton>
        <IconButton $w={24} aria-label="セキュリティ">
          <svg width="12" height="15" viewBox="0 0 12 15"><path d="m6 0 6 3v6c0 3-3 5-6 6-3-1-6-3-6-6V3z" fill="#179c82" /><path d="m3 7 2 2 4-4" fill="none" stroke="#fff" /></svg>
        </IconButton>
        <IconButton $w={24} aria-label="同期">
          <svg width="14" height="14"><circle cx="7" cy="7" r="6" fill="#0b2c5e" stroke="#2a6db8" /><circle cx="7" cy="7" r="3" fill="#2a7bd0" /><circle cx="7" cy="7" r="1" fill="#cfe5ff" /></svg>
        </IconButton>
        <IconButton $w={24} aria-label="ネットワーク">
          <svg width="16" height="14" fill="none" stroke="#eee"><path d="M5.5 2.5h10v8H5M9.5 11v2M6 13.5h7M.5.5h4v4h-4zM2.5 5v8h4" /></svg>
        </IconButton>
        <IconButton $w={23} aria-label="音量">
          <svg width="16" height="14" fill="none" stroke="#eee"><path d="M.5 4.5h2l4-4v12l-4-4h-2zM8.500 5c1 1 1 2 0 3.500M10.500 3c2 2 2 5 0 7.500" /><path d="M13 1c3 4 3 8 0 11" stroke="#777" /></svg>
        </IconButton>
        <IconButton $w={24} aria-label="入力モード">
          <svg width="14" height="14"><path d="M7 0h3l4 14h-4L7 4v8H5z" fill="#888" /><path d="m0 8 4 4M4 8l-4 4" stroke="#fff" /></svg>
        </IconButton>
        <IconButton $w={34} aria-label="ATOK">
          <svg width="14" height="14"><path d="M0 0h14v14H0z" fill="#fff" /><path d="M6 1h3l4 12H9L6 5v5l-4 3z" fill="#111" /></svg>
        </IconButton>
        <Clock>13:36<br />2020/08/22</Clock>
        <IconButton $w={38} aria-label="通知">
          <svg width="17" height="16" fill="none" stroke="#eee"><path d="M.5.5h15v12H11l-3 3-3-3H.5z" /></svg>
        </IconButton>
        <DesktopEdge />
      </Tray>
    </TaskBar>
  </Window>
);

export default App;
